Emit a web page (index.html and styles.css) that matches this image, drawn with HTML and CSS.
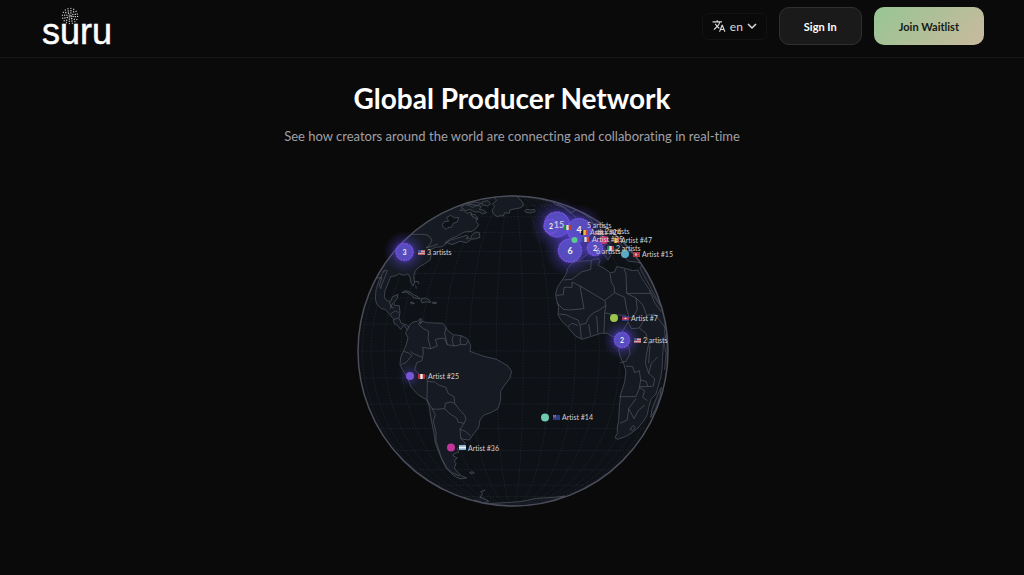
FILE: index.html
```html
<!DOCTYPE html>
<html lang="en">
<head>
<meta charset="utf-8">
<title>suru</title>
<link rel="stylesheet" href="styles.css">
</head>
<body>
<header class="header">
  <a class="logo" href="#" aria-label="suru">
    <svg class="logo-burst" viewBox="-9 -9 18 18" aria-hidden="true">
      <circle r="1.2" stroke-dasharray="1 .9"/>
      <circle r="3.2" stroke-dasharray="1.2 1.3"/>
      <circle r="5.4" stroke-dasharray="1.2 1.6"/>
      <circle r="7.6" stroke-dasharray="1 2"/>
    </svg>
    <span class="logo-word">suru</span>
  </a>
  <nav class="actions">
    <button class="lang" type="button">
      <svg class="lang-icon" viewBox="0 0 24 24" aria-hidden="true"><path d="M12.87 15.07l-2.54-2.51.03-.03A17.52 17.52 0 0 0 14.07 6H17V4h-7V2H8v2H1v2h11.17C11.5 7.92 10.44 9.75 9 11.35 8.07 10.32 7.3 9.19 6.69 8h-2c.73 1.63 1.73 3.17 2.98 4.56l-5.09 5.02L4 19l5-5 3.11 3.11.76-2.04zM18.5 10h-2L12 22h2l1.12-3h4.75L21 22h2l-4.5-12zm-2.62 7l1.62-4.33L19.12 17h-3.24z"/></svg>
      <span>en</span>
      <svg class="chevron" viewBox="0 0 10 10" aria-hidden="true"><path d="M1 3l4 4 4-4"/></svg>
    </button>
    <button class="btn btn-dark" type="button">Sign In</button>
    <button class="btn btn-accent" type="button">Join Waitlist</button>
  </nav>
</header>
<main class="hero">
  <h1 class="title">Global Producer Network</h1>
  <p class="subtitle">See how creators around the world are connecting and collaborating in real-time</p>
  <svg class="globe" viewBox="332 186 360 330" role="img" aria-label="Globe with artist locations">
    <defs>
      <clipPath id="sphere"><circle cx="489" cy="483" r="465"/></clipPath>
      <radialGradient id="glow"><stop offset=".3" stop-color="#5a48e0" stop-opacity=".6"/><stop offset=".65" stop-color="#5a48e0" stop-opacity=".2"/><stop offset="1" stop-color="#5a48e0" stop-opacity="0"/></radialGradient>
      <g id="us"><rect width="7" height="5" fill="#c9a9ad"/><path d="M0 .5h7M0 2.5h7M0 4.5h7" stroke="#b5555d" stroke-width=".9"/><rect width="3" height="2.6" fill="#46558f"/></g>
      <g id="it"><rect width="7" height="5" fill="#ddd"/><rect width="2.3" height="5" fill="#26804c"/><rect x="4.7" width="2.3" height="5" fill="#bd3c3c"/></g>
      <g id="be"><rect width="7" height="5" fill="#e7c33f"/><rect width="2.3" height="5" fill="#181818"/><rect x="4.7" width="2.3" height="5" fill="#c94343"/></g>
      <g id="fr"><rect width="7" height="5" fill="#ddd"/><rect width="2.3" height="5" fill="#37499b"/><rect x="4.7" width="2.3" height="5" fill="#c94343"/></g>
    </defs>
    <circle class="ocean" cx="513" cy="351" r="155"/>
    <g class="grid" transform="translate(513 351)">
      <path d="M-155 0H155M-152.6-26.9H152.6M-152.6 26.9H152.6M-145.7-53H145.7M-145.7 53H145.7M-134.2-77.5H134.2M-134.2 77.5H134.2M-118.7-99.6H118.7M-118.7 99.6H118.7M-99.6-118.7H99.6M-99.6 118.7H99.6M-77.5-134.2H77.5M-77.5 134.2H77.5M-53-145.7H53M-53 145.7H53"/>
      <path d="M0-155A150.5 155 0 0 0 0 155M0-155A141.8 155 0 0 0 0 155M0-155A128.8 155 0 0 0 0 155M0-155A111.9 155 0 0 0 0 155M0-155A91.5 155 0 0 0 0 155M0-155A68.4 155 0 0 0 0 155M0-155A43.2 155 0 0 0 0 155M0-155A16.7 155 0 0 0 0 155"/>
      <path d="M0-155A10.3 155 0 0 1 0 155M0-155A37 155 0 0 1 0 155M0-155A62.5 155 0 0 1 0 155M0-155A86.2 155 0 0 1 0 155M0-155A107.3 155 0 0 1 0 155M0-155A125.1 155 0 0 1 0 155M0-155A139.1 155 0 0 1 0 155M0-155A148.8 155 0 0 1 0 155"/>
    </g>
    <g transform="translate(350 190) scale(.33333)">
      <g class="land" clip-path="url(#sphere)">
        <!-- North and Central America -->
        <path d="M78 265A465 465 0 0 1 330 46L338 54 330 62 342 60 350 70 362 66 368 80 382 84 378 94 386 104 378 116 366 124 344 126 322 138 302 146 284 160 302 150 330 142 348 136 356 140 348 146 362 146 366 134 378 126 388 128 390 142 378 146 364 148 350 158 330 154 306 164 292 158 276 170 256 172 240 180 244 196 240 210 226 220 208 230 196 242 191 258 194 276 190 288 183 278 180 262 174 251 162 256 148 251 138 257 122 260 116 276 105 302 103 322 110 332 122 334 128 320 144 313 141 326 132 338 133 346 148 347 150 368 147 384 154 400 168 404 178 412 172 420 162 406 152 418 142 406 132 400 130 386 118 372 106 358 94 356 80 342 76 326 78 300 86 274 98 250 104 240 112 242 106 258 96 282 92 296 88 286 96 262Z"/>
        <path class="water" d="M277 104L284 94 296 94 290 82 302 76 314 84 326 82 322 96 310 100 304 112 294 112 288 118 280 112Z"/>
        <path class="border" d="M182 133H222L236 137 246 150 240 164 228 174 248 168 264 162M118 336L124 352 132 354M122 372L136 362 146 368M132 388L146 384M120 356L128 340 M98 246L104 244"/>
        <path d="M334 52L346 62 360 58 374 66 390 66 398 72 410 68 400 60 388 58 394 50 380 46 368 52 356 46 344 44ZM352 42L376 36 394 40 384 46 366 44ZM396 36L414 32 422 40 412 48 396 44ZM362 72L376 74 384 88 370 82Z"/>
        <path d="M430 22L440 30 428 42 434 50 426 60 430 72 442 80 450 77 460 78 464 68 478 70 480 60 496 56 510 54 520 48 518 38 508 26 490 10Z"/>
        <path d="M524 62L530 58 542 60 554 58 555 65 540 69 528 67Z"/>
        <path d="M156 308L166 302 180 306 190 314 204 320 210 326 192 324 182 314 168 306ZM212 327L226 324 238 330 242 337 226 336 216 339ZM180 337L190 337 193 341 184 341ZM247 337L259 337 258 341 248 340ZM194 276L204 274 207 282M197 287L199 296"/>
        <!-- South America -->
        <path d="M172 420L180 404 190 396 202 394 212 384 216 390 210 402 218 394 230 398 252 399 278 400 286 410 296 424 310 434 334 437 352 446 362 466 360 484 376 490 402 499 440 508 474 528 485 544 480 564 462 588 452 604 452 630 444 656 422 668 402 675 390 690 386 712 372 730 358 750 340 748 332 744 346 760 338 768 322 775 326 787 310 792 310 798 322 804 312 812 318 820 313 834 322 846 336 858 350 864 328 866 310 856 288 834 278 814 268 790 256 760 252 730 244 690 238 650 231 630 204 614 184 592 172 562 156 536 150 524 152 502 160 484 168 466 174 444 166 428Z"/>
        <path class="border" d="M212 388L206 404 220 416 236 424 234 446 242 476 218 472 220 488 216 512 200 518 194 540 218 562 230 556 232 574 254 576 268 586 288 592 294 610 312 620 314 640 326 656 344 676 348 688 342 700 330 718 346 724 362 738M330 718L332 744M232 574L231 630 246 656 258 658 284 656 286 640 300 636 314 640M284 656L300 672 320 684 324 696 342 700M246 656L256 674 250 694 258 726 258 752 266 778 274 804 290 832 306 848 330 858M242 476L262 468 256 448 282 444 292 464 312 468 332 464 348 464 354 452M288 412L284 430 292 464M310 436L306 450 312 468M334 438L330 450 332 464M160 484L174 488 186 496 168 518 154 524M182 484L192 492 216 502"/>
        <path d="M359 848L366 845 373 848 366 852ZM406 900L392 905 398 912 390 922 402 926 416 934 402 940 388 934 372 930M340 922L400 942 510 935 560 925 614 922 645 918 590 938 500 955 400 950Z"/>
        <!-- Africa -->
        <path d="M665 220L682 214 718 212 744 205 750 212 745 226 764 236 780 248 794 246 800 230 822 234 848 242 864 240 870 254 882 274 898 298 916 326 934 352 948 372 952 392 948 430 940 464 938 500 936 538 932 564 924 592 918 612 904 626 896 652 892 674 880 694 864 714 846 728 826 740 802 748 795 742 802 730 802 712 806 692 808 650 812 612 824 576 828 544 822 524 810 498 806 480 812 464 802 442 788 440 772 430 752 430 722 440 696 448 676 438 654 412 634 392 624 374 626 352 620 330 617 314 622 292 638 268 650 250 652 236Z"/>
        <path class="border" d="M652 292H666V276L690 288 764 332 794 308 792 290 784 276 780 250M724 212L722 238 694 246 666 268 640 270M690 288L702 356 660 360 640 358 620 338M618 316L640 314 642 292 652 292M764 332L768 346 748 360 732 368 716 382 708 400 690 404 684 390 668 384 648 374 626 372M822 236L828 252 830 310 858 324 862 358 852 378 838 384 830 358 824 322 794 308M830 310L900 310M768 346L764 368 786 374 826 376M764 368L762 430M740 378L744 430M716 402L722 438M690 404L694 446M654 410L666 400 684 406M826 376L834 396 816 428 800 440M834 396L844 416 868 414 888 430 896 462 890 490M858 324L878 344 890 376 874 404 868 414M890 376L914 372 934 398 948 416M898 300L914 338 934 366M896 462L914 454 930 462M812 468H836L840 492 828 514 810 518M828 528L848 530 854 548 868 542 872 570 888 574 894 590 870 590 858 620 808 620M872 570L868 592 884 602 878 622 892 632M890 490L886 520 896 550 914 566 910 588 894 590M896 550L904 520 924 500M896 520L900 466M858 626L836 656 832 690 810 700M836 656L852 686 866 660 884 646M840 718L850 706 856 714 848 722Z"/>
        <path d="M902 682L906 658 924 612 934 592 930 622 916 660Z"/>
        <!-- Europe and western Asia -->
        <path d="M606 34A465 465 0 0 1 954 470L944 430 946 392 940 358 920 326 898 286 878 250 870 234 878 222 858 216 836 214 820 198 806 182 788 176 770 162 758 168 782 196 774 210 760 190 740 174 724 182 708 196 690 210 674 212 660 196 668 174 684 170 674 152 700 140 718 118 734 112 724 90 706 74 680 60 660 70 640 52 618 44Z"/>
        <path class="border" d="M668 100L682 96 690 118 704 132 680 142 684 120ZM710 90L728 102 750 98 764 114 790 116 804 138 824 144 838 162 862 174 878 196M650 46L676 54 702 72 724 76 748 92M728 120L748 134 768 142 782 160M786 150L810 160 826 180 850 190 870 210M704 180L720 164 744 164M864 180L882 212 902 238 922 274 940 324M886 200L910 258 932 288M900 254L918 290 928 316 946 352M940 350L952 412M950 402L952 540 942 592M940 450L948 490 944 540M870 196L884 206 896 232 886 220ZM620 40L650 56 678 82"/>
      </g>
    </g>
    <circle class="rim" cx="513" cy="351" r="155"/>
    <g class="cluster">
      <circle class="halo" cx="404.500" cy="252" r="21"/><circle class="disc" cx="404.500" cy="252" r="8.500"/>
      <circle class="halo" cx="557" cy="224.500" r="27"/><circle class="disc" cx="557" cy="224.500" r="12.500"/>
      <circle class="halo" cx="579" cy="230" r="26"/><circle class="disc" cx="579" cy="230" r="11.500"/>
      <circle class="halo" cx="570" cy="250.500" r="26"/><circle class="disc" cx="570" cy="250.500" r="11.500"/>
      <circle class="disc" cx="551" cy="226.500" r="7"/>
      <circle class="halo" cx="595" cy="248" r="19"/><circle class="disc" cx="595" cy="248" r="7.500"/>
      <circle class="halo" cx="622" cy="340" r="19"/><circle class="disc" cx="622" cy="340" r="7.500"/>
    </g>
    <circle class="halo halo-soft" cx="410" cy="376" r="13"/>
    <circle cx="410" cy="376" r="4" fill="#7658d6"/>
    <circle cx="451" cy="447.500" r="4" fill="#c2359a"/>
    <circle cx="545" cy="417.500" r="4" fill="#6fcab2"/>
    <circle cx="614" cy="318" r="4" fill="#9cc54d"/>
    <circle cx="574.500" cy="240" r="3" fill="#5bc98d"/>
    <circle cx="604" cy="240" r="4" fill="#cf3d76"/>
    <circle cx="625" cy="254" r="4" fill="#58acc5"/>
    <use href="#us" x="418" y="250"/>
    <use href="#us" x="634" y="338"/>
    <use href="#it" x="564" y="225"/>
    <use href="#be" x="581" y="230"/>
    <use href="#us" x="596" y="230"/>
    <use href="#fr" x="582" y="237"/>
    <use href="#be" x="612" y="238"/>
    <use href="#it" x="607" y="246"/>
    <g transform="translate(418 374)"><rect width="7" height="5" fill="#ac343b"/><rect x="2.300" width="2.400" height="5" fill="#eee"/></g>
    <g transform="translate(459 445)"><rect width="7" height="5" fill="#7fb2d5"/><rect y="1.700" width="7" height="1.700" fill="#eee"/></g>
    <g transform="translate(553 415)"><rect width="7" height="5" fill="#293d80"/><path d="M0 0l3 2.500M3 0L0 2.500" stroke="#c77c90" stroke-width=".8"/></g>
    <g transform="translate(622 316)"><rect width="7" height="5" fill="#2e3d8c"/><rect y="1.300" width="7" height="2.400" fill="#c9354c"/><rect x="2.700" y="1.800" width="1.600" height="1.400" fill="#eee"/></g>
    <g transform="translate(633 252)"><rect width="7" height="5" fill="#b53541"/><circle cx="3" cy="2.500" r="1.200" fill="#ddb0b4"/></g>
    <g class="count">
      <text x="404.500" y="254.500">3</text><text x="551" y="229">2</text><text class="count-lg count-dim" x="559" y="228">15</text>
      <text class="count-lg" x="570" y="254">6</text><text class="count-lg" x="579" y="233">4</text><text x="595" y="250.500">2</text><text x="622" y="342.500">2</text>
    </g>
    <g class="label">
      <text x="427" y="255">3 artists</text><text x="428" y="379">Artist #25</text><text x="468" y="451">Artist #36</text>
      <text x="562" y="420">Artist #14</text><text x="631" y="321">Artist #7</text><text x="643" y="343">2 artists</text>
      <text x="642" y="257">Artist #15</text><text x="621" y="243">Artist #47</text><text x="616" y="251">2 artists</text>
      <text x="587" y="228">5 artists</text><text x="590" y="235">Artist #24</text><text x="605" y="234">2 artists</text>
      <text x="592" y="242">Artist #35</text><text x="596" y="254">6 artists</text>
    </g>
  </svg>
</main>
</body>
</html>
```

FILE: styles.css
```css
* { box-sizing: border-box; }
body {
  margin: 0;
  background: #0a0a0a;
  color: #fff;
  font-family: Lato, "Liberation Sans", sans-serif;
  font-variant-ligatures: none;
}
.header {
  display: flex;
  align-items: center;
  justify-content: space-between;
  padding: 7px 40px 12px 42px;
  border-bottom: 1px solid #161616;
}
.logo {
  display: grid;
  justify-items: center;
  height: 38px;
  color: #fff;
  text-decoration: none;
}
.logo-burst {
  grid-area: 1 / 1;
  width: 18px;
  height: 18px;
  margin-right: 14px;
  fill: none;
  stroke: #ddd;
  stroke-width: 1.2;
}
.logo-word {
  grid-area: 1 / 1;
  padding-top: 5px;
  font: 36px/40px "Liberation Sans", sans-serif;
  -webkit-text-stroke: .5px #fff;
}
.actions { display: flex; align-items: center; gap: 12px; }
button { font-family: inherit; font-variant-ligatures: none; cursor: pointer; }
.lang {
  display: flex;
  align-items: center;
  gap: 4px;
  height: 27px;
  padding: 0 9px;
  border: 1px solid #131313;
  border-radius: 6px;
  background: #0a0a0a;
  color: #ddd;
  font-size: 12px;
}
.lang-icon { width: 14px; height: 14px; fill: #ddd; }
.chevron { width: 10px; height: 10px; fill: none; stroke: #ddd; stroke-width: 1.5; }
.btn {
  height: 38px;
  border: 1px solid #303030;
  border-radius: 10px;
  font-size: 11px;
  font-weight: 700;
}
.btn-dark { padding: 0 24px; background: #1a1a1a; color: #fff; }
.btn-accent {
  padding: 0 25px;
  border: 0;
  background: linear-gradient(135deg, #97c594, #c9b99e);
  color: #141a14;
}
.hero {
  display: flex;
  flex-direction: column;
  align-items: center;
  padding-top: 21px;
}
.title { margin: 0; font-size: 28px; line-height: 38px; font-weight: 700; }
.subtitle { margin: 9px 0 40px; color: #a0a0a6; font-size: 13px; line-height: 20px; }
.globe { width: 360px; height: 330px; overflow: visible; }
.ocean { fill: #0e1116; }
.rim { fill: none; stroke: #4b4e5a; stroke-width: 1.5; }
.grid { fill: none; stroke: #31353c; stroke-width: .5; stroke-dasharray: 1.5 1.5; }
.land { fill: #161a22; stroke: #565b67; stroke-width: 2; stroke-linejoin: round; }
.land .border { fill: none; }
.land .water { fill: #0e1116; }
.halo { fill: url(#glow); }
.halo-soft { opacity: .4; }
.disc { fill: #5a50c4; fill-opacity: .88; stroke: #7650df; stroke-width: 1.5; stroke-dasharray: 2 .6; }
.count { fill: #eee; font-size: 7px; font-weight: 700; text-anchor: middle; }
.count-lg { font-size: 9px; }
.count-dim { opacity: .7; }
.label { fill: #d2d2d6; font-size: 7px; }
```
